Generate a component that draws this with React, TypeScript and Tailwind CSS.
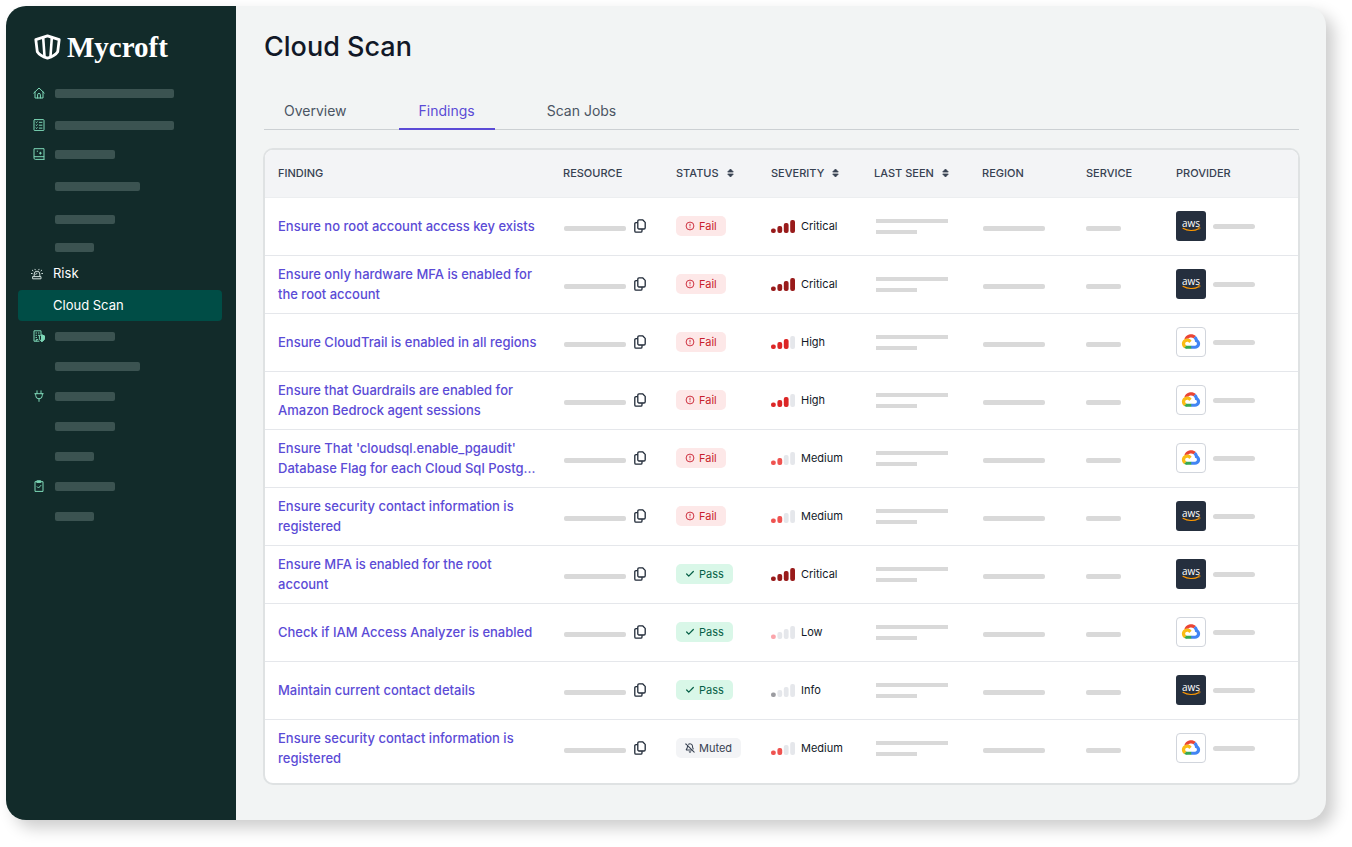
import type { ReactNode } from "react"
import { Check, BellOff } from "lucide-react"

type Status = "Fail" | "Pass" | "Muted"
type Severity = "Critical" | "High" | "Medium" | "Low" | "Info"
type Provider = "aws" | "gcp"

interface Finding {
  id: number
  title: string
  status: Status
  severity: Severity
  provider: Provider
}

const findings: Finding[] = [
  { id: 1, title: "Ensure no root account access key exists", status: "Fail", severity: "Critical", provider: "aws" },
  { id: 2, title: "Ensure only hardware MFA is enabled for the root account", status: "Fail", severity: "Critical", provider: "aws" },
  { id: 3, title: "Ensure CloudTrail is enabled in all regions", status: "Fail", severity: "High", provider: "gcp" },
  { id: 4, title: "Ensure that Guardrails are enabled for Amazon Bedrock agent sessions", status: "Fail", severity: "High", provider: "gcp" },
  { id: 5, title: "Ensure That 'cloudsql.enable_pgaudit' Database Flag for each Cloud Sql Postg...", status: "Fail", severity: "Medium", provider: "gcp" },
  { id: 6, title: "Ensure security contact information is registered", status: "Fail", severity: "Medium", provider: "aws" },
  { id: 7, title: "Ensure MFA is enabled for the root account", status: "Pass", severity: "Critical", provider: "aws" },
  { id: 8, title: "Check if IAM Access Analyzer is enabled", status: "Pass", severity: "Low", provider: "gcp" },
  { id: 9, title: "Maintain current contact details", status: "Pass", severity: "Info", provider: "aws" },
  { id: 10, title: "Ensure security contact information is registered", status: "Muted", severity: "Medium", provider: "gcp" },
]

const columns = [
  { label: "FINDING", width: "w-[285px]", sortable: false },
  { label: "RESOURCE", width: "w-[113px]", sortable: false },
  { label: "STATUS", width: "w-[95px]", sortable: true },
  { label: "SEVERITY", width: "w-[103px]", sortable: true },
  { label: "LAST SEEN", width: "w-[108px]", sortable: true },
  { label: "REGION", width: "w-[104px]", sortable: false },
  { label: "SERVICE", width: "w-[90px]", sortable: false },
  { label: "PROVIDER", width: "w-[135px]", sortable: false },
]

const severityStyles: Record<Severity, { filled: number; color: string }> = {
  Critical: { filled: 4, color: "fill-[#991b1b]" },
  High: { filled: 3, color: "fill-[#dc2626]" },
  Medium: { filled: 2, color: "fill-[#ef5350]" },
  Low: { filled: 1, color: "fill-[#fba5ab]" },
  Info: { filled: 1, color: "fill-[#9b9ba0]" },
}

const signalBars = [
  { x: 0, height: 4.6 },
  { x: 6.4, height: 7 },
  { x: 12.8, height: 10 },
  { x: 19.2, height: 13 },
]

function LineIcon({ children }: { children: ReactNode }) {
  return (
    <svg width="12" height="12" viewBox="0 0 12 12" fill="none" stroke="currentColor" strokeLinecap="round" strokeLinejoin="round" aria-hidden="true">
      {children}
    </svg>
  )
}

const HomeIcon = () => (
  <LineIcon>
    <path d="M.8 6 6 1l5.200 5M2 5v6h8V5M4.600 11V7.800a1.400 1.400 0 0 1 2.800 0V11" />
  </LineIcon>
)

const ListIcon = () => (
  <LineIcon>
    <rect x="1" y=".6" width="10" height="11" rx=".8" />
    <path d="m3 3.200.500.500.700-.900M6.300 3.300H9M3 6.100l.500.500.700-.900M6.300 6.200H9M3 9l.500.500.700-.900M6.300 9.100H9" />
  </LineIcon>
)

const BookIcon = () => (
  <LineIcon>
    <path d="M11 8.600V.7H1v9.400c0 .8.500 1.300 1.300 1.300H11M1.400 8.700H11v2.600" />
    <path d="M4.200 3.200h.4M7.400 4.200v2M6.500 5.200h1.800" />
  </LineIcon>
)

const SirenIcon = () => (
  <LineIcon>
    <path d="M3.200 8.500V6a2.800 2.800 0 0 1 5.600 0v2.500M2 8.600h8v2.200H2zM6 5.200c-.8 0-1.200.5-1.200 1.300M.4 5.500h.8M10.800 5.500h.8M1.300 2.200l.7.600M10.700 2.200l-.7.600M4 1.300l.2.500M8 1.300l-.2.500" />
  </LineIcon>
)

const BuildingShieldIcon = () => (
  <LineIcon>
    <path d="M8 4V.8H1v10.400h5M3 3h.6M5.400 3H6M3 5.300h.6M5.400 5.300H6M3 7.600h.6M3.200 11V9.600h1.600" />
    <path d="m8.900 5 2.500.9v2.300c0 1.500-1 2.500-2.500 3.200-1.500-.7-2.500-1.700-2.500-3.200V5.900z" />
    <path d="m8.900 5 2.500.9v2.300c0 1.500-1 2.500-2.500 3.200z" fill="currentColor" />
  </LineIcon>
)

const PlugIcon = () => (
  <LineIcon>
    <path d="M4 .8v2.700M8 .8v2.700M1.800 3.700h8.400M2.700 3.800v1.700a3.300 3.300 0 0 0 6.600 0V3.800M6 9v2.400" />
  </LineIcon>
)

const ClipboardIcon = () => (
  <LineIcon>
    <path d="M4 1.700H2v9.700h8V1.700H8" />
    <path d="M4.200.8h3.600v1.600H4.200z" fill="currentColor" />
    <path d="m4.200 6.700 1.300 1.300 2.400-2.600" />
  </LineIcon>
)

const navTop = [
  { height: "h-8", width: "w-[119px]", icon: <HomeIcon /> },
  { height: "h-8", width: "w-[119px]", icon: <ListIcon /> },
  { height: "h-[26px]", width: "w-[60px]", icon: <BookIcon /> },
  { height: "h-[38px]", width: "w-[85px]", icon: null },
  { height: "h-7", width: "w-[60px]", icon: null },
  { height: "h-7", width: "w-[39px]", icon: null },
]

const navBottom = [
  { height: "h-[30px]", width: "w-[60px]", icon: <BuildingShieldIcon /> },
  { height: "h-[30px]", width: "w-[85px]", icon: null },
  { height: "h-[30px]", width: "w-[60px]", icon: <PlugIcon /> },
  { height: "h-[30px]", width: "w-[60px]", icon: null },
  { height: "h-[30px]", width: "w-[39px]", icon: null },
  { height: "h-[30px]", width: "w-[60px]", icon: <ClipboardIcon /> },
  { height: "h-[30px]", width: "w-[39px]", icon: null },
]

function NavPlaceholder({ height, width, icon }: { height: string; width: string; icon: ReactNode }) {
  return (
    <li className={`flex items-center pl-[15px] ${height}`}>
      <span className="w-[22px] text-[#7ed9b8]">{icon}</span>
      <span className={`h-[9px] rounded-xs bg-[#3b5351] ${width}`} />
    </li>
  )
}

function Sidebar() {
  return (
    <aside className="w-[230px] shrink-0 bg-[#122b2a] pt-[23px] pr-[14px] pl-3 text-[13px] text-white">
      <a href="#" className="flex h-9 items-center gap-1.5 pl-4">
        <svg width="27" height="26" viewBox="0 0 27 26" fill="none" stroke="white" strokeLinejoin="round" aria-hidden="true">
          <path d="M13.500 1.800 25.200 5.600l-1.500 12.200c-2 3.200-6.200 5.200-10.200 6.400-4-1.200-8.200-3.200-10.200-6.400L1.800 5.600z" strokeWidth="2.800" />
          <path d="m9.200 4 1.400 19.500M17.800 4l-1.400 19.500" strokeWidth="2.600" />
        </svg>
        <span className="font-['Liberation_Serif',serif] text-[29px] leading-9 font-bold">Mycroft</span>
      </a>
      <nav className="pt-3">
        <ul>
          {navTop.map((item, i) => (
            <NavPlaceholder key={i} {...item} />
          ))}
          <li>
            <a href="#" className="flex h-[26px] items-center pl-[13px]">
              <span className="w-[22px] text-[#cfdedb]">
                <SirenIcon />
              </span>
              Risk
            </a>
          </li>
          <li className="pt-[3px]">
            <a href="#" aria-current="page" className="flex h-[31px] items-center rounded-sm bg-[#004d46] pl-[35px]">
              Cloud Scan
            </a>
          </li>
          {navBottom.map((item, i) => (
            <NavPlaceholder key={i} {...item} />
          ))}
        </ul>
      </nav>
    </aside>
  )
}

function SortIcon() {
  return (
    <svg width="7" height="10" viewBox="0 0 7 10" fill="currentColor" stroke="currentColor" strokeLinejoin="round" strokeWidth=".8" aria-hidden="true">
      <path d="M3.500 1 6.300 4H.7zM3.500 9 .7 6h5.600z" />
    </svg>
  )
}

function CopyIcon() {
  return (
    <svg width="12" height="14" viewBox="0 0 12 14" fill="none" stroke="currentColor" strokeWidth="1.300" strokeLinejoin="round" aria-hidden="true">
      <path d="M5 .8h3.600l2.600 2.600v5.400c0 .7-.5 1.200-1.200 1.200H5c-.7 0-1.200-.5-1.200-1.200V2C3.800 1.300 4.300.8 5 .8z" />
      <path d="M3.600 3.600H2c-.7 0-1.200.5-1.200 1.200v7.200c0 .7.500 1.200 1.200 1.200h4.800c.7 0 1.200-.5 1.200-1.200v-1.800" />
    </svg>
  )
}

function StatusBadge({ status }: { status: Status }) {
  if (status === "Pass") {
    return (
      <span className="inline-flex h-5 items-center gap-1 rounded-[5px] bg-[#d9f7e8] px-[9px] text-[#065f46]">
        <Check size={10} strokeWidth={3} />
        Pass
      </span>
    )
  }
  if (status === "Muted") {
    return (
      <span className="inline-flex h-5 items-center gap-1 rounded-[5px] bg-[#f3f4f6] px-[9px] text-[#374151]">
        <BellOff size={10} strokeWidth={2.5} />
        Muted
      </span>
    )
  }
  return (
    <span className="inline-flex h-5 items-center gap-1 rounded-[5px] bg-[#fde8e8] px-[9px] text-[#c81e2e]">
      <svg width="10" height="10" viewBox="0 0 10 10" fill="none" stroke="currentColor" strokeWidth=".9" aria-hidden="true">
        <circle cx="5" cy="5" r="3.900" />
        <path d="M5 2.800v2.600M5 6.300v.9" />
      </svg>
      Fail
    </span>
  )
}

function SeverityLevel({ severity }: { severity: Severity }) {
  const { filled, color } = severityStyles[severity]
  return (
    <div className="flex items-center gap-[5px]">
      <svg width="25" height="13" viewBox="0 0 25 13" aria-hidden="true">
        {signalBars.map((bar, i) => (
          <rect
            key={bar.x}
            x={bar.x}
            y={13 - bar.height}
            width="4.8"
            height={bar.height}
            rx="2"
            className={i < filled ? color : "fill-[#e5e7eb]"}
          />
        ))}
      </svg>
      {severity}
    </div>
  )
}

function ProviderLogo({ provider }: { provider: Provider }) {
  if (provider === "aws") {
    return (
      <svg width="30" height="30" viewBox="0 0 30 30" role="img" aria-label="AWS">
        <rect width="30" height="30" rx="3" fill="#252f3e" />
        <text x="15" y="15.500" textAnchor="middle" fill="white" fontSize="10" fontWeight="500" fontFamily="'Open Sans', sans-serif">
          aws
        </text>
        <path d="M7 17.300c4.600 2.800 11.300 3 15.600.4" fill="none" stroke="#f90" strokeWidth="1.100" strokeLinecap="round" />
        <path d="M21.800 16.500c1-.2 2-.3 2.200 0s-.1 1.200-.8 2" fill="none" stroke="#f90" strokeWidth=".8" />
      </svg>
    )
  }
  return (
    <span className="flex size-[30px] items-center justify-center rounded-sm border border-gray-300 bg-white">
      <svg width="20" height="20" viewBox="0 0 128 128" role="img" aria-label="Google Cloud">
        <path fill="#ea4535" d="M80.6 40.3h.4l-.2-.2 14-14v-.3c-11.8-10.4-28.1-14-43.2-9.500C36.500 20.800 24.900 32.800 20.700 48c.2-.1.5-.2.8-.2 5.200-3.400 11.400-5.400 17.900-5.400 2.200 0 4.300.2 6.400.6.1-.1.2-.1.3-.1 9-9.900 24.200-11.100 34.600-2.600h-.1z" />
        <path fill="#4285f4" d="M108.1 47.800c-2.300-8.500-7.100-16.200-13.800-22.100L80 39.900c6 4.900 9.500 12.300 9.300 20v2.500c16.900 0 16.900 25.200 0 25.200H63.900v20h-.1l.1.200h25.400c14.600.1 27.500-9.300 31.800-23.100 4.300-13.800-1-28.800-13-36.900z" />
        <path fill="#36a852" d="M39 107.900h26.300V87.700H39c-1.900 0-3.700-.4-5.400-1.100l-15.200 14.600v.2c6 4.300 13.200 6.600 20.700 6.600z" />
        <path fill="#f9bc15" d="M40.200 41.900c-14.900.1-28.100 9.300-32.900 22.800-4.800 13.600 0 28.500 11.800 37.300l15.600-14.900c-8.600-3.700-10.600-14.500-4-20.800 6.600-6.400 17.800-4.400 21.700 3.800L68 55.200C61.400 46.900 51.100 42 40.200 42.100z" />
      </svg>
    </span>
  )
}

function FindingRow({ finding, last }: { finding: Finding; last: boolean }) {
  return (
    <tr className={`h-[58px] ${last ? "" : "border-b border-gray-200"}`}>
      <td className="pr-[10px] pl-[13px]">
        <a href="#" className="block text-[13px] leading-5 font-medium text-[#5b4bd6]">
          {finding.title}
        </a>
      </td>
      <td className="pl-[14px]">
        <div className="flex items-center gap-2">
          <span className="pt-1">
            <span className="block h-[5px] w-[62px] rounded-xs bg-[#d9d9d9]" />
          </span>
          <button type="button" aria-label="Copy resource" className="text-[#1f2937]">
            <CopyIcon />
          </button>
        </div>
      </td>
      <td className="pl-[13px]">
        <StatusBadge status={finding.status} />
      </td>
      <td className="pl-[13px]">
        <SeverityLevel severity={finding.severity} />
      </td>
      <td className="pl-[15px]">
        <div className="flex flex-col gap-[7px]">
          <span className="h-1 w-[72px] bg-[#d9d9d9]" />
          <span className="h-1 w-[41px] bg-[#d9d9d9]" />
        </div>
      </td>
      <td className="pt-1 pl-[14px]">
        <span className="block h-[5px] w-[62px] rounded-xs bg-[#d9d9d9]" />
      </td>
      <td className="pt-1 pl-[13px]">
        <span className="block h-[5px] w-[35px] rounded-xs bg-[#d9d9d9]" />
      </td>
      <td className="pl-[13px]">
        <div className="flex items-center gap-[7px]">
          <ProviderLogo provider={finding.provider} />
          <span className="h-[5px] w-[42px] rounded-full bg-[#d9d9d9]" />
        </div>
      </td>
    </tr>
  )
}

export default function App() {
  return (
    <div className="bg-white pt-1.5 pr-[26px] pb-[27px] pl-1.5 font-['Inter',sans-serif]">
      <div className="flex overflow-hidden rounded-[20px] bg-[#f2f4f4] shadow-[8px_8px_16px_rgba(0,0,0,0.2)]">
        <Sidebar />

        <main className="min-w-0 flex-1 pt-[25px] pr-[26px] pb-[35px] pl-[27px]">
          <div className="px-px">
            <h1 className="text-[27px] leading-8 font-medium text-[#111827]">Cloud Scan</h1>

            {/* Tabs */}
            <div role="tablist" className="mt-[31px] flex h-9 gap-8 border-b border-[#ccd0d3] text-sm text-[#4b5563]">
              <button type="button" role="tab" aria-selected="false" className="-mb-px border-b-2 border-transparent px-5">
                Overview
              </button>
              <button type="button" role="tab" aria-selected="true" className="-mb-px border-b-2 border-[#5b4bd6] px-5 text-[#5b4bd6]">
                Findings
              </button>
              <button type="button" role="tab" aria-selected="false" className="-mb-px border-b-2 border-transparent px-5">
                Scan Jobs
              </button>
            </div>
          </div>

          {/* Findings table */}
          <div className="mt-[18px] overflow-hidden rounded-[10px] border-2 border-[#dfe2e3] bg-white pb-[6px]">
            <table className="w-full table-fixed border-collapse text-left text-[11px] text-[#111827]">
              <thead>
                <tr className="h-[47px] border-b border-[#eceef0] bg-[#f3f4f6] text-[#374151]">
                  {columns.map((column) => (
                    <th key={column.label} scope="col" className={`pl-[13px] font-medium ${column.width}`}>
                      {column.sortable ? (
                        <button type="button" className="flex items-center gap-2">
                          {column.label}
                          <SortIcon />
                        </button>
                      ) : (
                        column.label
                      )}
                    </th>
                  ))}
                </tr>
              </thead>
              <tbody>
                {findings.map((finding, i) => (
                  <FindingRow key={finding.id} finding={finding} last={i === findings.length - 1} />
                ))}
              </tbody>
            </table>
          </div>
        </main>
      </div>
    </div>
  )
}
